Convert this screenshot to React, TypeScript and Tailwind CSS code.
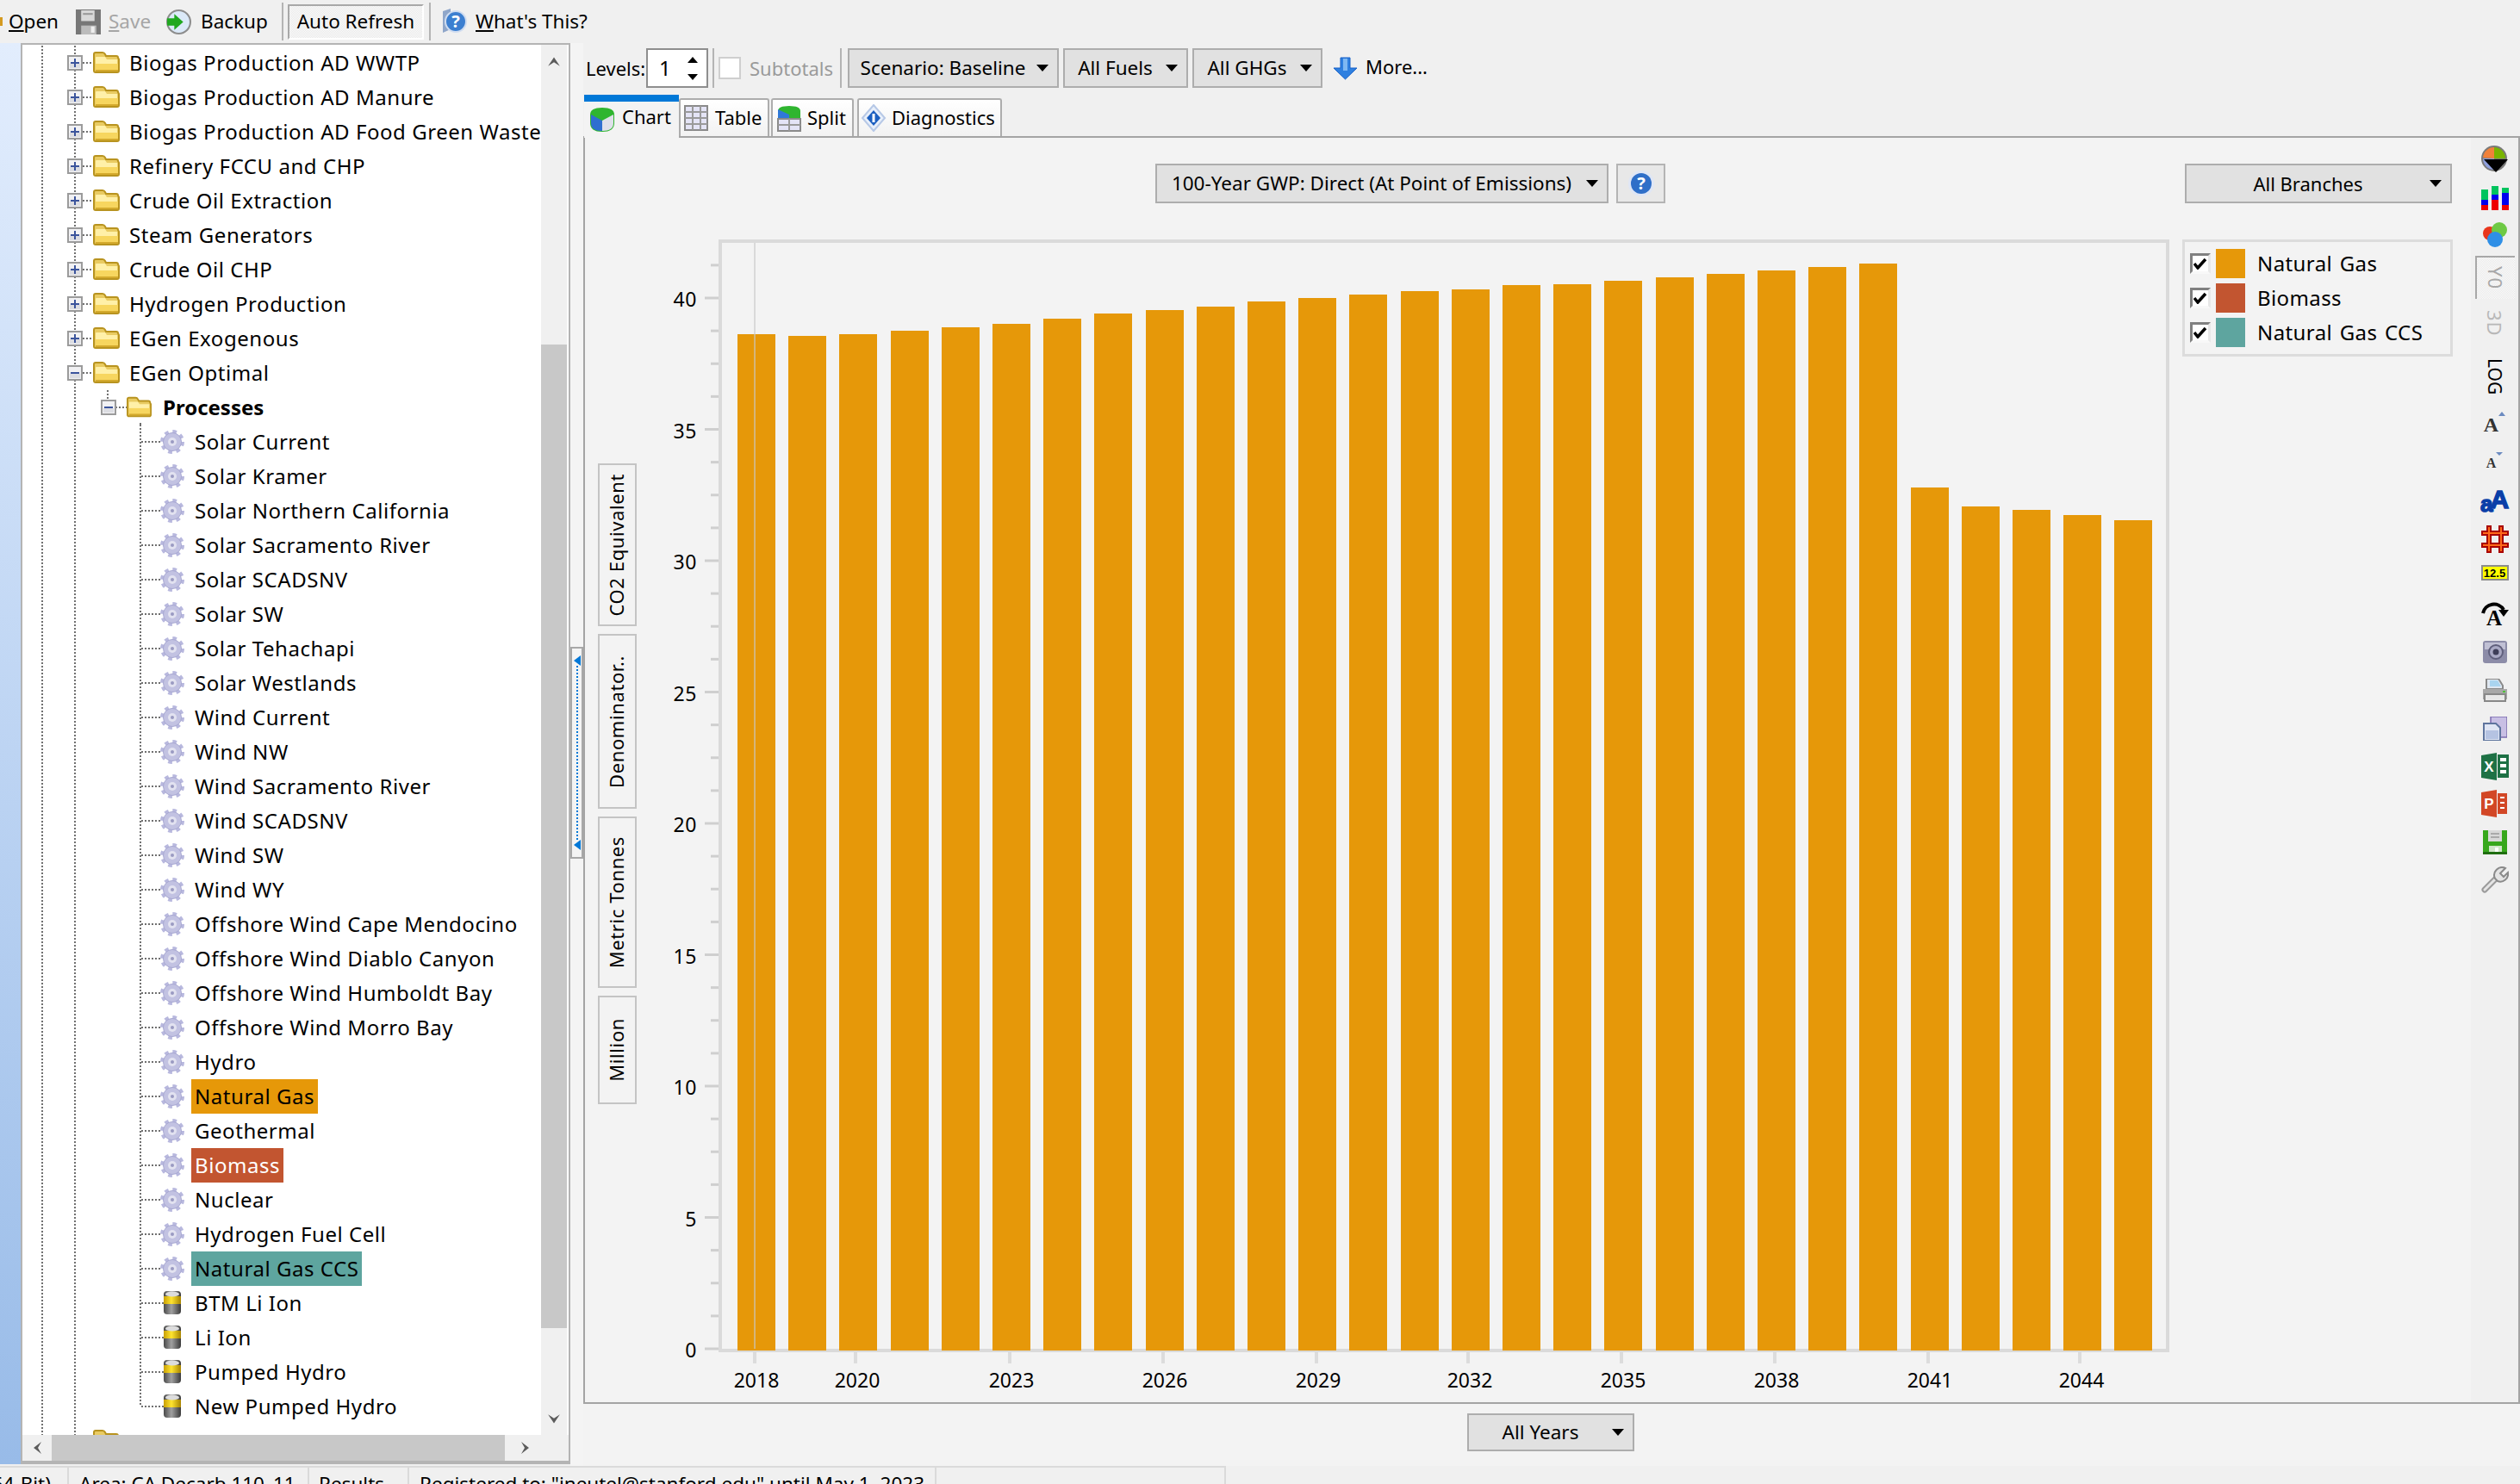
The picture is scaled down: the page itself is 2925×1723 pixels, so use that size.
import React from "react";

const ROWS: { label: string; kind: string; bg?: string; color?: string }[] = [
  { label: "Biogas Production AD WWTP", kind: "plus" },
  { label: "Biogas Production AD Manure", kind: "plus" },
  { label: "Biogas Production AD Food Green Waste", kind: "plus" },
  { label: "Refinery FCCU and CHP", kind: "plus" },
  { label: "Crude Oil Extraction", kind: "plus" },
  { label: "Steam Generators", kind: "plus" },
  { label: "Crude Oil CHP", kind: "plus" },
  { label: "Hydrogen Production", kind: "plus" },
  { label: "EGen Exogenous", kind: "plus" },
  { label: "EGen Optimal", kind: "minus" },
  { label: "Processes", kind: "proc" },
  ...[
    "Solar Current", "Solar Kramer", "Solar Northern California", "Solar Sacramento River", "Solar SCADSNV",
    "Solar SW", "Solar Tehachapi", "Solar Westlands", "Wind Current", "Wind NW", "Wind Sacramento River",
    "Wind SCADSNV", "Wind SW", "Wind WY", "Offshore Wind Cape Mendocino", "Offshore Wind Diablo Canyon",
    "Offshore Wind Humboldt Bay", "Offshore Wind Morro Bay", "Hydro",
  ].map((label) => ({ label, kind: "gear" })),
  { label: "Natural Gas", kind: "gear", bg: "bg-[#e69809]" },
  { label: "Geothermal", kind: "gear" },
  { label: "Biomass", kind: "gear", bg: "bg-[#c25530]", color: "text-white" },
  { label: "Nuclear", kind: "gear" },
  { label: "Hydrogen Fuel Cell", kind: "gear" },
  { label: "Natural Gas CCS", kind: "gear", bg: "bg-[#5ea59f]" },
  { label: "BTM Li Ion", kind: "batt" },
  { label: "Li Ion", kind: "batt" },
  { label: "Pumped Hydro", kind: "batt" },
  { label: "New Pumped Hydro", kind: "batt", color: "" },
];

const BAR_TOPS = [388, 390, 388, 384, 380, 376, 370, 364, 360, 356, 350, 346, 342, 338, 336, 331, 330, 326, 322, 318, 314, 310, 306, 566, 588, 592, 598, 604];
const X_LABELS: [string, number][] = [["2018", 876], ["2020", 993], ["2023", 1172], ["2026", 1350], ["2029", 1528], ["2032", 1704], ["2035", 1882], ["2038", 2060], ["2041", 2238], ["2044", 2414]];

const Dots = ({ x1, y1, x2, y2 }: { x1: number; y1: number; x2: number; y2: number }) => (
  <line x1={x1} y1={y1} x2={x2} y2={y2} stroke="#707070" strokeWidth="2" strokeDasharray="2 2" />
);

function Expander({ x, y, plus }: { x: number; y: number; plus: boolean }) {
  return (
    <g transform={`translate(${x} ${y})`}>
      <rect x="1" y="1" width="16" height="16" fill="#f1f1f3" stroke="#9b9b9b" strokeWidth="2" />
      <rect x="3" y="10" width="12" height="5" fill="#dcdde2" />
      <rect x="4" y="8" width="10" height="2" fill="#3b549c" />
      {plus && <rect x="8" y="4" width="2" height="10" fill="#3b549c" />}
    </g>
  );
}

function Folder({ x, y, w = 31, h = 25 }: { x: number; y: number; w?: number; h?: number }) {
  return (
    <svg x={x} y={y} width={w} height={h} viewBox="0 0 31 25">
      <path d="M1 22V3q0-2 2-2h8q2 0 3 2l1 2h12q2 0 2 2l1 2v13q0 2-2 2H3q-2 0-2-2z" fill="#e9cb62" stroke="#b8931f" strokeWidth="2" />
      <path d="M3 7q0-1 1-1h10l2 3h12v6H3z" fill="#fff0a8" />
      <path d="M3 14h26v8H3z" fill="#f7d65f" />
      <path d="M3 21h26v2H3z" fill="#d4aa2d" />
    </svg>
  );
}

function Gear({ x, y }: { x: number; y: number }) {
  return (
    <g transform={`translate(${x} ${y})`}>
      <circle cx="14" cy="14" r="12" fill="none" stroke="#b8b8de" strokeWidth="4" strokeDasharray="4.7 4.72" />
      <circle cx="14" cy="14" r="10.5" fill="#c2c2e2" stroke="#a8a8d2" strokeWidth="1" />
      <circle cx="14" cy="14" r="5" fill="#e2e2f0" />
      <circle cx="14" cy="14" r="2" fill="#9a9ac2" />
    </g>
  );
}

function Battery({ x, y }: { x: number; y: number }) {
  return (
    <g transform={`translate(${x} ${y})`}>
      <defs>
        <linearGradient id="bat" x1="0" x2="1" y1="0" y2="0">
          <stop offset="0" stopColor="#4a4a4a" />
          <stop offset="0.45" stopColor="#a0a0a0" />
          <stop offset="1" stopColor="#3a3a3a" />
        </linearGradient>
        <linearGradient id="baty" x1="0" x2="1" y1="0" y2="0">
          <stop offset="0" stopColor="#c9a004" />
          <stop offset="0.45" stopColor="#ffe430" />
          <stop offset="1" stopColor="#a88400" />
        </linearGradient>
      </defs>
      <rect x="0" y="0" width="20" height="27" rx="4" fill="url(#bat)" />
      <rect x="0" y="6" width="20" height="9" fill="url(#baty)" />
      <ellipse cx="10" cy="3.500" rx="8" ry="3" fill="#dcdcdc" />
    </g>
  );
}

function RowGuide({ kind, last }: { kind: string; last: boolean }) {
  const level1 = kind === "plus" || kind === "minus";
  const width = level1 ? 120 : kind === "proc" ? 159 : 196;
  return (
    <svg width={width} height="40" className="shrink-0">
      <Dots x1={23} y1={0} x2={23} y2={40} />
      <Dots x1={61} y1={0} x2={61} y2={40} />
      {level1 && (
        <>
          <Dots x1={70} y1={20} x2={82} y2={20} />
          <Expander x={52} y={11} plus={kind === "plus"} />
          <Folder x={82} y={7} />
        </>
      )}
      {kind === "proc" && (
        <>
          <Dots x1={99} y1={0} x2={99} y2={11} />
          <Dots x1={108} y1={20} x2={121} y2={20} />
          <Dots x1={137} y1={38} x2={137} y2={40} />
          <Expander x={91} y={11} plus={false} />
          <Folder x={121} y={7} w={29} h={25} />
        </>
      )}
      {(kind === "gear" || kind === "batt") && (
        <>
          <Dots x1={137} y1={0} x2={137} y2={last ? 20 : 40} />
          <Dots x1={138} y1={20} x2={kind === "gear" ? 160 : 164} y2={20} />
          {kind === "gear" ? <Gear x={160} y={6} /> : <Battery x={164} y={6} />}
        </>
      )}
    </svg>
  );
}

function TreeRow({ row, index }: { row: (typeof ROWS)[number]; index: number }) {
  return (
    <div className="flex h-10 items-center whitespace-nowrap">
      <RowGuide kind={row.kind} last={index === ROWS.length - 1} />
      <span className={`h-10 px-[4px] leading-[40px] ${row.kind === "proc" ? "font-bold tracking-normal" : "tracking-[0.55px]"} ${row.bg ?? ""} ${row.color ?? ""}`}>
        {row.label}
      </span>
    </div>
  );
}

const Tri = () => (
  <svg width="14" height="8" viewBox="0 0 14 8" className="shrink-0">
    <path d="M0 0h14L7 8z" fill="#000" />
  </svg>
);

function Drop({ label, className }: { label: string; className: string }) {
  return (
    <div className={`flex shrink-0 items-center border-2 border-[#adadad] bg-[#e1e1e1] ${className}`}>
      <span className="flex-1 whitespace-nowrap text-center">{label}</span>
      <span className="mr-[10px] flex">
        <Tri />
      </span>
    </div>
  );
}

const Sep = ({ className }: { className: string }) => <div className={`w-[2px] shrink-0 bg-[#b4b4b4] ${className}`} />;

const Check = () => (
  <div className="flex h-[24px] w-[24px] shrink-0 items-center justify-center border-[3px] border-t-[#808080] border-l-[#808080] border-r-[#e8e8e8] border-b-[#f8f8f8] bg-white">
    <svg width="16" height="14" viewBox="0 0 16 14">
      <path d="M1 7l4 5 9-10" fill="none" stroke="#000" strokeWidth="3.500" />
    </svg>
  </div>
);

const LegendRow = ({ label, color }: { label: string; color: string }) => (
  <div className="flex h-[40px] items-center">
    <Check />
    <div className={`ml-[6px] h-[34px] w-[34px] shrink-0 ${color}`} />
    <span className="ml-[14px] whitespace-nowrap tracking-[0.4px] [word-spacing:2px]">{label}</span>
  </div>
);

const VLabel = ({ label, className }: { label: string; className: string }) => (
  <div className={`flex w-[45px] shrink-0 items-center justify-center border-2 border-[#c4c4c4] ${className}`}>
    <span className="-ml-[2px] rotate-180 whitespace-nowrap text-[22px] tracking-[0.6px] [writing-mode:vertical-rl]">{label}</span>
  </div>
);

const hatch = "[background:repeating-conic-gradient(#fbfbfb_0_25%,#e9e9e9_0_50%)_0_0/2px_2px]";

/* ------- small drawn icons ------- */
const IconSave = () => (
  <svg width="29" height="29" viewBox="0 0 28 28" className="shrink-0">
    <rect width="28" height="28" fill="#777" />
    <rect x="6" y="1" width="15" height="12" fill="#d8d8d8" />
    <rect x="8" y="4" width="11" height="2" fill="#999" />
    <rect x="6" y="18" width="17" height="10" fill="#bbb" />
    <rect x="17" y="19" width="4" height="7" fill="#eee" />
  </svg>
);
const IconBackup = () => (
  <svg width="29" height="29" viewBox="0 0 28 28" className="shrink-0">
    <circle cx="14" cy="14" r="13" fill="#dbe9f8" stroke="#8d8d8d" strokeWidth="2" />
    <path d="M1 10h8V5l10 9-10 9v-5H1z" fill="#1fa81f" />
  </svg>
);
const IconHelpPage = () => (
  <svg width="30" height="32" viewBox="0 0 30 32" className="shrink-0">
    <path d="M2 4l9-3v24l-9 4z" fill="#8fa6c9" />
    <circle cx="17" cy="16" r="12" fill="#3c7fd0" stroke="#cfdcf0" strokeWidth="2" />
    <text x="17" y="23" textAnchor="middle" fontSize="20" fontWeight="700" fill="#fff">?</text>
  </svg>
);
const IconChartTab = () => (
  <svg width="30" height="30" viewBox="0 0 30 30" className="shrink-0">
    <path d="M1 9q0-8 14-8t14 8v10q0 10-14 10T1 19z" fill="#2fb52f" />
    <path d="M2 9l13 7v12q-13 0-13-9z" fill="#2f6fd0" />
    <path d="M15 16l13-7v10q0 9-13 9z" fill="#dfe0ea" />
  </svg>
);
const IconTableTab = () => (
  <svg width="28" height="30" viewBox="0 0 28 30" className="shrink-0">
    <rect x="1" y="1" width="26" height="28" fill="#e4e4f6" stroke="#8a8a8a" strokeWidth="2" />
    <path d="M10 1v28M19 1v28M1 8h26M1 15h26M1 22h26" stroke="#9a9a9a" strokeWidth="2" />
  </svg>
);
const IconSplitTab = () => (
  <svg width="28" height="32" viewBox="0 0 28 32" className="shrink-0">
    <path d="M1 8q0-6 13-6t13 6v8H1z" fill="#2fb52f" />
    <path d="M1 6l13 6v5H1z" fill="#2f78d8" />
    <rect x="1" y="17" width="26" height="14" fill="#e4e4f6" stroke="#8a8a8a" strokeWidth="2" />
    <path d="M14 17v14M1 24h26" stroke="#9a9a9a" strokeWidth="2" />
  </svg>
);
const IconDiag = () => (
  <svg width="30" height="32" viewBox="0 0 30 32" className="shrink-0">
    <path d="M15 1l13 15-13 15L2 16z" fill="#e8effa" stroke="#b6c8e6" strokeWidth="2" />
    <path d="M15 7l8 9-8 9-8-9z" fill="#1c5fc0" />
    <rect x="13.500" y="11" width="3" height="10" fill="#fff" />
  </svg>
);
const IconMore = () => (
  <svg width="29" height="27" viewBox="0 0 29 27" className="shrink-0">
    <path d="M9 1h11v12h8L14.500 26 1 13h8z" fill="#2f80e0" stroke="#1660c8" strokeWidth="1" />
    <path d="M12 2h5v14h-5z" fill="#7fb8f2" />
  </svg>
);
const IconHelp = () => (
  <svg width="32" height="32" viewBox="0 0 32 32">
    <circle cx="16" cy="16" r="15" fill="#dfe6f5" />
    <circle cx="16" cy="16" r="12" fill="#2f6fc8" />
    <text x="16" y="23" textAnchor="middle" fontSize="20" fontWeight="700" fill="#fff">?</text>
  </svg>
);

const ArrowV = ({ up }: { up: boolean }) => (
  <svg width="16" height="16" viewBox="0 0 14 14">
    <path d={up ? "M1 12l6-9 6 9-6-4z" : "M1 2l6 9 6-9-6 4z"} fill="#5c5c5c" />
  </svg>
);
const ArrowH = ({ left }: { left: boolean }) => (
  <svg width="14" height="16" viewBox="0 0 14 16">
    <path d={left ? "M12 1L3 8l9 7-4-7z" : "M2 1l9 7-9 7 4-7z"} fill="#5c5c5c" />
  </svg>
);

const TOOLS: { h: string; node: React.ReactNode }[] = [
  {
    h: "h-[50px]",
    node: (
      <svg width="34" height="34" viewBox="0 0 34 34">
        <circle cx="16" cy="16" r="15" fill="#7a7a7a" />
        <path d="M16 16V3a13 13 0 0 1 13 13z" fill="#78b400" />
        <path d="M16 16V3A13 13 0 0 0 3 15z" fill="#f0813a" />
        <path d="M16 16H3a13 13 0 0 0 13 13z" fill="#8fa0dd" />
        <path d="M4 17h28L18 32z" fill="#000" />
      </svg>
    ),
  },
  {
    h: "h-[40px]",
    node: (
      <svg width="32" height="28" viewBox="0 0 32 28">
        <path d="M0 4h8v12H0zM12 0h8v10h-8zM24 2h8v6h-8z" fill="#00c45e" />
        <path d="M0 16h8v6H0zM12 10h8v6h-8zM24 8h8v14h-8z" fill="#0000ee" />
        <path d="M0 22h8v6H0zM12 16h8v12h-8zM24 22h8v6h-8z" fill="#ee0000" />
      </svg>
    ),
  },
  {
    h: "h-[46px]",
    node: (
      <svg width="30" height="30" viewBox="0 0 30 30">
        <circle cx="9" cy="13" r="8" fill="#e8361c" />
        <circle cx="20" cy="9" r="9" fill="#6ec944" />
        <circle cx="15" cy="20" r="9" fill="#2f8fe6" />
      </svg>
    ),
  },
  {
    h: "h-[52px]",
    node: (
      <div className={`flex h-[50px] w-[46px] items-center justify-center border-t-2 border-l-2 border-[#a8a8a8] ${hatch}`}>
        <span className="text-[22px] tracking-[1px] text-[#a8a8a8] [writing-mode:vertical-rl]">Y0</span>
      </div>
    ),
  },
  { h: "h-[54px]", node: <span className="text-[22px] tracking-[1px] text-[#b8b8b8] [writing-mode:vertical-rl]">3D</span> },
  { h: "h-[70px]", node: <span className="text-[21px] text-black [writing-mode:vertical-rl]">LOG</span> },
  {
    h: "h-[42px]",
    node: (
      <span className="flex items-start font-['Liberation_Serif',serif] text-[24px] font-bold leading-none text-[#333]">
        A<span className="mt-[-3px] h-0 w-0 border-x-[4px] border-b-[5px] border-x-transparent border-b-[#6b8ac0]" />
      </span>
    ),
  },
  {
    h: "h-[48px]",
    node: (
      <span className="flex items-start font-['Liberation_Serif',serif] text-[16px] font-bold leading-none text-[#333]">
        A<span className="mt-[-5px] h-0 w-0 border-x-[4px] border-t-[4px] border-x-transparent border-t-[#6b8ac0]" />
      </span>
    ),
  },
  {
    h: "h-[40px]",
    node: (
      <span className="flex items-center font-['Liberation_Sans',sans-serif] font-black leading-none text-[#0a3fa8] [-webkit-text-stroke:1.5px_#0a3fa8]">
        <span className="translate-y-[3px] text-[26px]">a</span>
        <span className="-ml-[3px] -translate-y-[2px] text-[30px]">A</span>
      </span>
    ),
  },
  {
    h: "h-[48px]",
    node: (
      <svg width="32" height="32" viewBox="0 0 32 32">
        <path d="M9 0v32M23 0v32M0 9h32M0 23h32" stroke="#a80000" strokeWidth="6" />
        <path d="M9 2v28M23 2v28M2 9h28M2 23h28" stroke="#ff6a1a" strokeWidth="2" />
      </svg>
    ),
  },
  {
    h: "h-[30px]",
    node: (
      <div className="flex h-[18px] w-[32px] items-center justify-center border-2 border-[#8c8c8c] bg-[#ffff00] font-['Liberation_Sans',sans-serif] text-[13px] font-bold leading-none text-black">
        12.5
      </div>
    ),
  },
  {
    h: "h-[64px]",
    node: (
      <svg width="32" height="30" viewBox="0 0 32 30">
        <path d="M2 15a13 13 0 0 1 24-4" fill="none" stroke="#000" strokeWidth="4" />
        <path d="M20 11h12l-6 8z" fill="#000" />
        <text x="15" y="29" textAnchor="middle" fontSize="25" fontWeight="700" fontFamily="Liberation Serif" fill="#000">A</text>
      </svg>
    ),
  },
  {
    h: "h-[28px]",
    node: (
      <svg width="28" height="28" viewBox="0 0 28 28" className="shrink-0">
        <rect x="0" y="0" width="28" height="26" rx="3" fill="#8c8ca8" />
        <rect x="2" y="2" width="24" height="8" fill="#c0c0d4" />
        <circle cx="15" cy="13" r="8" fill="#a9a9c4" stroke="#5f5f7c" strokeWidth="2" />
        <circle cx="15" cy="13" r="3.500" fill="#3e3e58" />
      </svg>
    ),
  },
  {
    h: "h-[60px]",
    node: (
      <svg width="28" height="28" viewBox="0 0 28 28">
        <path d="M4 0h14l5 8v4H4z" fill="#dfe7f0" stroke="#8a8a8a" strokeWidth="2" />
        <path d="M8 2h9l4 7H8z" fill="#a9d4ef" />
        <path d="M0 12h28v12H0z" fill="#a8a8a8" />
        <path d="M2 18h24v8H2z" fill="#e8e8e8" stroke="#888" strokeWidth="2" />
        <rect x="23" y="14" width="3" height="2" fill="#4fbf3a" />
      </svg>
    ),
  },
  {
    h: "h-[28px]",
    node: (
      <svg width="28" height="28" viewBox="0 0 28 28" className="shrink-0">
        <rect x="9" y="0" width="19" height="24" fill="#c8bfe4" stroke="#7c6cae" strokeWidth="1.500" />
        <path d="M1 8h14l5 5v15H1z" fill="#e0e6f4" stroke="#5f759e" strokeWidth="2" />
        <rect x="3" y="16" width="15" height="10" fill="#b5c3e2" />
      </svg>
    ),
  },
  {
    h: "h-[60px]",
    node: (
      <svg width="32" height="32" viewBox="0 0 32 32">
        <path d="M0 3l18-3v32L0 29z" fill="#1e7145" />
        <rect x="19" y="2" width="13" height="27" fill="#1e7145" />
        <path d="M22 6h7v4h-7zM22 13h7v4h-7zM22 20h7v4h-7z" fill="#fff" />
        <text x="9" y="22" textAnchor="middle" fontSize="17" fontWeight="700" fontFamily="Liberation Sans" fill="#fff">X</text>
      </svg>
    ),
  },
  {
    h: "h-[26px]",
    node: (
      <svg width="32" height="32" viewBox="0 0 32 32" className="shrink-0">
        <path d="M0 3l18-3v32L0 29z" fill="#d24726" />
        <rect x="19" y="4" width="11" height="24" fill="#d24726" />
        <path d="M22 8h5v2h-5zM22 14h5v2h-5zM22 20h5v2h-5z" fill="#fff" />
        <text x="9" y="22" textAnchor="middle" fontSize="17" fontWeight="700" fontFamily="Liberation Sans" fill="#fff">P</text>
      </svg>
    ),
  },
  {
    h: "h-[64px]",
    node: (
      <svg width="28" height="28" viewBox="0 0 28 28">
        <rect width="28" height="28" fill="#37a81c" />
        <rect x="6" y="0" width="16" height="13" fill="#d8d8d8" />
        <path d="M9 4h10M9 8h10" stroke="#aaa" strokeWidth="2" />
        <rect x="7" y="18" width="15" height="10" fill="#cfe6c8" />
        <rect x="14" y="20" width="4" height="6" fill="#fff" />
        <rect x="0" y="25" width="28" height="3" fill="#1f6e10" />
      </svg>
    ),
  },
  {
    h: "h-[24px]",
    node: (
      <svg width="32" height="32" viewBox="0 0 32 32" className="shrink-0">
        <path d="M4 27L18 13" stroke="#9a9a9a" strokeWidth="7" strokeLinecap="round" />
        <path d="M4 27L18 13" stroke="#e4e4e4" strokeWidth="3" strokeLinecap="round" />
        <path d="M16 14a9 9 0 0 1 12-12l-6 6 4 4 5-5a9 9 0 0 1-12 10z" fill="#e4e4e4" stroke="#8a8a8a" strokeWidth="2" />
      </svg>
    ),
  },
];

export default function App() {
  return (
    <div className="flex h-[1723px] w-[2925px] flex-col overflow-hidden bg-[#f0f0f0] font-['Noto_Sans',sans-serif] text-[24px] text-black">
      {/* top toolbar */}
      <div className="flex h-[50px] shrink-0 items-center whitespace-nowrap text-[22.5px]">
        <div className="h-[10px] w-[3px] bg-[#d49a20]" />
        <span className="ml-[7px] w-[56px]">
          <span className="underline">O</span>pen
        </span>
        <span className="ml-[22px] flex">
          <IconSave />
        </span>
        <span className="ml-[9px] w-[49px] text-[#a6a6a6]">
          <span className="underline">S</span>ave
        </span>
        <span className="ml-[18px] flex">
          <IconBackup />
        </span>
        <span className="ml-[11px] w-[77px]">Backup</span>
        <Sep className="ml-[17px] h-[44px]" />
        <div className={`ml-[5px] flex h-[41px] w-[158px] items-center justify-center border-2 border-t-[#a8a8a8] border-l-[#a8a8a8] border-r-white border-b-white ${hatch}`}>
          Auto Refresh
        </div>
        <Sep className="ml-[6px] h-[44px]" />
        <span className="ml-[12px] flex">
          <IconHelpPage />
        </span>
        <span className="ml-[10px]">
          <span className="underline">W</span>hat's This?
        </span>
      </div>

      {/* middle */}
      <div className="flex h-[1652px] shrink-0">
        <div className="h-[1650px] w-[24px] shrink-0 bg-linear-to-b from-[#e2edfd] to-[#98bbe8]" />

        {/* tree */}
        <div className="flex h-[1650px] w-[638px] shrink-0 flex-col border-2 border-b-[4px] border-[#b4b4b4] bg-white">
          <div className="flex min-h-0 flex-1">
            <div className="min-w-0 flex-1 overflow-hidden pt-px">
              {ROWS.map((row, i) => (
                <TreeRow key={row.label + i} row={row} index={i} />
              ))}
              <div className="flex h-10 items-center">
                <svg width="120" height="40" className="shrink-0">
                  <Dots x1={23} y1={0} x2={23} y2={40} />
                  <Dots x1={61} y1={0} x2={61} y2={40} />
                  <Folder x={82} y={7} />
                </svg>
              </div>
            </div>
            <div className="flex w-[30px] shrink-0 flex-col bg-[#f0f0f0]">
              <div className="flex h-[348px] shrink-0 justify-center pt-[11px]">
                <ArrowV up />
              </div>
              <div className="h-[1142px] shrink-0 bg-[#c8c8c8]" />
              <div className="flex flex-1 items-end justify-center pb-[10px]">
                <ArrowV up={false} />
              </div>
            </div>
            <div className="w-[2px] shrink-0 bg-white" />
          </div>
          <div className="flex h-[30px] shrink-0 items-center bg-[#f0f0f0]">
            <div className="flex w-[34px] shrink-0 justify-center">
              <ArrowH left />
            </div>
            <div className="h-full w-[526px] shrink-0 bg-[#c8c8c8]" />
            <div className="flex w-[48px] shrink-0 justify-center">
              <ArrowH left={false} />
            </div>
          </div>
        </div>

        {/* splitter */}
        <div className="w-[15px] shrink-0 bg-[#f4f4f4]">
          <div className="mt-[701px] flex h-[246px] flex-col items-center justify-between border-2 border-[#a8a8a8] py-[8px]">
            <svg width="8" height="12" viewBox="0 0 8 12">
              <path d="M8 0v12L0 6z" fill="#0078d7" />
            </svg>
            <div className="w-[2px] flex-1 border-l-2 border-dotted border-[#0078d7]" />
            <svg width="8" height="12" viewBox="0 0 8 12">
              <path d="M8 0v12L0 6z" fill="#0078d7" />
            </svg>
          </div>
        </div>

        {/* main */}
        <div className="flex min-w-0 flex-1 flex-col">
          <div className="flex h-[60px] shrink-0 items-start pt-[6px] whitespace-nowrap text-[22.5px]">
            <span className="ml-[3px] flex h-[46px] w-[70px] shrink-0 items-center text-[22px]">Levels:</span>
            <div className="flex h-[46px] w-[72px] shrink-0 items-center justify-between border-2 border-[#8e8e8e] bg-white pl-[13px] pr-[10px]">
              <span className="text-[24px]">1</span>
              <div className="flex flex-col gap-[13px]">
                <svg width="12" height="7" viewBox="0 0 12 7">
                  <path d="M0 7h12L6 0z" fill="#000" />
                </svg>
                <svg width="12" height="7" viewBox="0 0 12 7">
                  <path d="M0 0h12L6 7z" fill="#000" />
                </svg>
              </div>
            </div>
            <Sep className="ml-[5px] h-[46px]" />
            <div className="ml-[5px] mt-[10px] h-[26px] w-[26px] shrink-0 border-2 border-[#cfcfcf] bg-white" />
            <span className="ml-[10px] flex h-[46px] w-[105px] shrink-0 items-center text-[22px] text-[#9a9a9a]">Subtotals</span>
            <Sep className="h-[46px]" />
            <Drop label="Scenario: Baseline" className="ml-[7px] h-[46px] w-[245px]" />
            <Drop label="All Fuels" className="ml-[5px] h-[46px] w-[145px]" />
            <Drop label="All GHGs" className="ml-[5px] h-[46px] w-[151px]" />
            <span className="ml-[12px] flex h-[46px] items-center">
              <IconMore />
            </span>
            <span className="ml-[9px] flex h-[42px] items-center text-[22px]">More...</span>
          </div>

          <div className="flex h-[48px] shrink-0 items-end text-[22px]">
            <div className="relative z-10 -mb-[2px] ml-[1px] flex h-[50px] w-[110px] items-center gap-[8px] border-t-[8px] border-t-[#0078d7] bg-[#f3f3f3] pl-[6px]">
              <IconChartTab />
              <span className="-mt-[8px]">Chart</span>
            </div>
            <div className="flex h-[44px] w-[105px] items-center gap-[8px] rounded-t-[3px] border-2 border-b-0 border-[#adadad] bg-linear-to-b from-white to-[#f2f2f2] pl-[4px]">
              <IconTableTab />
              <span className="-mt-[2px]">Table</span>
            </div>
            <div className="ml-[2px] flex h-[44px] w-[96px] items-center gap-[7px] rounded-t-[3px] border-2 border-b-0 border-[#adadad] bg-linear-to-b from-white to-[#f2f2f2] pl-[5px]">
              <IconSplitTab />
              <span className="-mt-[2px]">Split</span>
            </div>
            <div className="ml-[4px] flex h-[44px] w-[168px] items-center gap-[6px] rounded-t-[3px] border-2 border-b-0 border-[#adadad] bg-linear-to-b from-white to-[#f2f2f2] pl-[2px]">
              <IconDiag />
              <span className="-mt-[2px]">Diagnostics</span>
            </div>
          </div>

          {/* frame */}
          <div className="flex h-[1472px] shrink-0 border-2 border-[#a4a4a4] bg-[#f3f3f3]">
            <div className="flex min-w-0 flex-1 flex-col">
              <div className="flex h-[118px] shrink-0 items-start pt-[30px]">
                <Drop label="100-Year GWP: Direct (At Point of Emissions)" className="ml-[662px] h-[46px] w-[526px] text-[22.5px]" />
                <div className="ml-[9px] flex h-[46px] w-[57px] shrink-0 items-center justify-center border-2 border-[#b4b4b4] bg-[#e8e8e8]">
                  <IconHelp />
                </div>
                <Drop label="All Branches" className="ml-auto mr-[22px] h-[46px] w-[310px] text-[22px]" />
              </div>

              <div className="flex min-h-0 flex-1">
                <div className="ml-[15px] flex w-[45px] shrink-0 flex-col gap-[9px] pt-[260px]">
                  <VLabel label="CO2 Equivalent" className="h-[189px]" />
                  <VLabel label="Denominator.." className="h-[203px]" />
                  <VLabel label="Metric Tonnes" className="h-[199px]" />
                  <VLabel label="Million" className="h-[126px]" />
                </div>

                <svg width="1770" height="1350" viewBox="750 278 1770 1350" className="ml-[11px] shrink-0">
                  <rect x="836" y="280" width="1680" height="1288" fill="none" stroke="#dadada" strokeWidth="4" />
                  {Array.from({ length: 34 }, (_, i) => {
                    const major = i % 4 === 0;
                    const y = 1566 - i * 38.125;
                    return <rect key={i} x={major ? 818 : 825} y={y - 1.5} width={major ? 16 : 9} height="3" fill="#cfcfcf" />;
                  })}
                  {[0, 5, 10, 15, 20, 25, 30, 35, 40].map((v) => (
                    <text key={v} x="809" y={1566 - v * 30.5 + 10} textAnchor="end" fontSize="23" letterSpacing="0.6" fill="#000">
                      {v}
                    </text>
                  ))}
                  {BAR_TOPS.map((top, i) => (
                    <rect key={i} x={Math.round(856 + i * 59.2)} y={top} width="44" height={1568 - top} fill="#e69809" />
                  ))}
                  <rect x="875" y="282" width="2" height="1284" fill="#c8c8c8" opacity="0.6" />
                  {X_LABELS.map(([label, x]) => (
                    <g key={label}>
                      <rect x={x - 2} y="1570" width="4" height="13" fill="#dcdcdc" />
                      <text x={x + 2} y="1611" textAnchor="middle" fontSize="23" fill="#000">
                        {label}
                      </text>
                    </g>
                  ))}
                </svg>

                <div className="ml-[13px] flex h-[136px] w-[314px] shrink-0 flex-col justify-center border-[3px] border-[#dcdcdc] pl-[6px] text-[24px]">
                  <LegendRow label="Natural Gas" color="bg-[#e69809]" />
                  <LegendRow label="Biomass" color="bg-[#c25530]" />
                  <LegendRow label="Natural Gas CCS" color="bg-[#5ea59f]" />
                </div>
              </div>
            </div>

            <div className="flex w-[55px] shrink-0 flex-col items-center bg-[#f0f0f0]">
              {TOOLS.map((t, i) => (
                <div key={i} className={`flex w-full shrink-0 items-center justify-center ${t.h}`}>
                  {t.node}
                </div>
              ))}
            </div>
          </div>

          <div className="flex h-[72px] shrink-0 bg-[#f3f3f3] pt-[11px]">
            <Drop label="All Years" className="ml-[1026px] h-[44px] w-[194px] text-[22.5px]" />
          </div>
        </div>
      </div>

      {/* status bar */}
      <div className="h-[21px] shrink-0 overflow-hidden">
        <div className="flex h-[40px] w-[1423px] items-center whitespace-nowrap border-r-2 border-t-2 border-[#dadada] text-[22.5px] leading-[40px]">
          <div className="flex w-[80px] shrink-0 justify-end overflow-hidden border-r-2 border-[#dadada] pr-[19px]">(64-Bit)</div>
          <div className="w-[279px] shrink-0 border-r-2 border-[#dadada] pl-[12px]">Area: CA Decarb 110_11</div>
          <div className="w-[116px] shrink-0 border-r-2 border-[#dadada] pl-[11px]">Results</div>
          <div className="w-[612px] shrink-0 border-r-2 border-[#dadada] pl-[12px]">Registered to: "jneutel@stanford.edu" until May 1, 2023</div>
        </div>
      </div>
    </div>
  );
}
